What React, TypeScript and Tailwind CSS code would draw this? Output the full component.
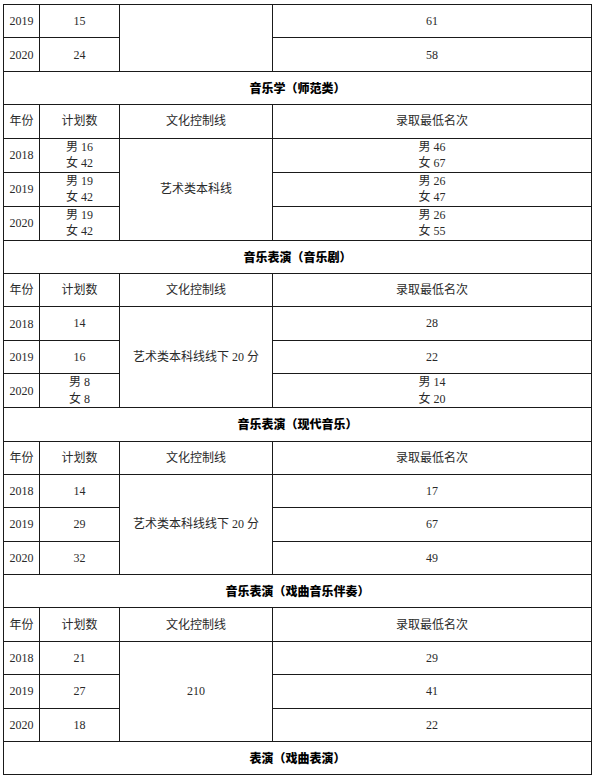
import { Fragment } from "react";

const FONT = '"Liberation Serif", "Noto Sans CJK SC", serif';
const TITLE_FONT = '"Noto Sans CJK SC", "Liberation Sans", sans-serif';

type Row = { year: string; plan: string[]; rank: string[] };
type Block = { title: string; line: string; rows: Row[] };

const BLOCKS: Block[] = [
  {
    title: "音乐学（师范类）",
    line: "艺术类本科线",
    rows: [
      { year: "2018", plan: ["男 16", "女 42"], rank: ["男 46", "女 67"] },
      { year: "2019", plan: ["男 19", "女 42"], rank: ["男 26", "女 47"] },
      { year: "2020", plan: ["男 19", "女 42"], rank: ["男 26", "女 55"] },
    ],
  },
  {
    title: "音乐表演（音乐剧）",
    line: "艺术类本科线线下 20 分",
    rows: [
      { year: "2018", plan: ["14"], rank: ["28"] },
      { year: "2019", plan: ["16"], rank: ["22"] },
      { year: "2020", plan: ["男 8", "女 8"], rank: ["男 14", "女 20"] },
    ],
  },
  {
    title: "音乐表演（现代音乐）",
    line: "艺术类本科线线下 20 分",
    rows: [
      { year: "2018", plan: ["14"], rank: ["17"] },
      { year: "2019", plan: ["29"], rank: ["67"] },
      { year: "2020", plan: ["32"], rank: ["49"] },
    ],
  },
  {
    title: "音乐表演（戏曲音乐伴奏）",
    line: "210",
    rows: [
      { year: "2018", plan: ["21"], rank: ["29"] },
      { year: "2019", plan: ["27"], rank: ["41"] },
      { year: "2020", plan: ["18"], rank: ["22"] },
    ],
  },
];

const td = "border border-[#1a1a1a] p-0 text-center align-middle";
const tr = "h-[33.4px]";

function Lines({ items }: { items: string[] }) {
  return (
    <div className="leading-[16.5px]">
      {items.map((t) => (
        <div key={t}>{t}</div>
      ))}
    </div>
  );
}

function TitleRow({ title }: { title: string }) {
  return (
    <tr className={tr}>
      <td colSpan={4} className={`${td} font-black text-black`} style={{ fontFamily: TITLE_FONT }}>
        {title}
      </td>
    </tr>
  );
}

function HeaderRow() {
  return (
    <tr className={tr}>
      <td className={td}>年份</td>
      <td className={td}>计划数</td>
      <td className={td}>文化控制线</td>
      <td className={td}>录取最低名次</td>
    </tr>
  );
}

export default function App() {
  return (
    <div className="min-h-[778px] bg-white pl-[3px] pt-[4px]">
      <table
        className="w-[588px] table-fixed border-collapse text-[12px] text-[#2a2a2a]"
        style={{ fontFamily: FONT }}
      >
        <colgroup>
          <col className="w-[36px]" />
          <col className="w-[80px]" />
          <col className="w-[153px]" />
          <col className="w-[319px]" />
        </colgroup>
        <tbody>
          <tr className={tr}>
            <td className={td}>2019</td>
            <td className={td}>15</td>
            <td className={td} rowSpan={2}></td>
            <td className={td}>61</td>
          </tr>
          <tr className={tr}>
            <td className={td}>2020</td>
            <td className={td}>24</td>
            <td className={td}>58</td>
          </tr>
          {BLOCKS.map((b) => (
            <Fragment key={b.title}>
              <TitleRow title={b.title} />
              <HeaderRow />
              {b.rows.map((r, i) => (
                <tr key={r.year} className={tr}>
                  <td className={td}>{r.year}</td>
                  <td className={td}>
                    <Lines items={r.plan} />
                  </td>
                  {i === 0 && (
                    <td className={td} rowSpan={3}>
                      {b.line}
                    </td>
                  )}
                  <td className={td}>
                    <Lines items={r.rank} />
                  </td>
                </tr>
              ))}
            </Fragment>
          ))}
          <TitleRow title="表演（戏曲表演）" />
        </tbody>
      </table>
    </div>
  );
}
